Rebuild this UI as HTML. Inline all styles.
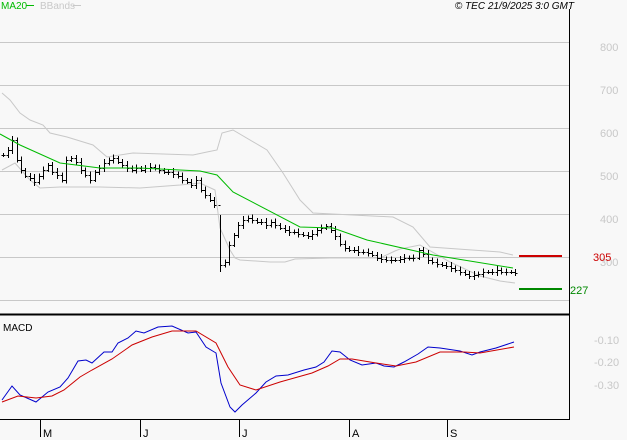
<!DOCTYPE html>
<html><head><meta charset="utf-8"><style>
body{margin:0;background:#f8f8f8;width:627px;height:440px;overflow:hidden;font-family:"Liberation Sans",sans-serif}
svg{position:absolute;left:0;top:0}
</style></head><body>
<svg id="s" width="627" height="440" xmlns="http://www.w3.org/2000/svg">
<rect width="627" height="440" fill="#f8f8f8"/>
<g stroke="#c8c8c8" stroke-width="1">
<line x1="0" y1="42.5" x2="569" y2="42.5"/><line x1="0" y1="85.5" x2="569" y2="85.5"/>
<line x1="0" y1="128.5" x2="569" y2="128.5"/><line x1="0" y1="171.5" x2="569" y2="171.5"/>
<line x1="0" y1="214.5" x2="569" y2="214.5"/><line x1="0" y1="257.5" x2="569" y2="257.5"/>
<line x1="0" y1="300.5" x2="569" y2="300.5"/>
</g>
<line x1="569.5" y1="9" x2="569.5" y2="420" stroke="#000"/>
<line x1="0" y1="314.5" x2="569" y2="314.5" stroke="#000" stroke-width="2"/>
<line x1="0" y1="419.5" x2="569" y2="419.5" stroke="#000"/>
<g stroke="#000"><line x1="40.5" y1="420" x2="40.5" y2="437"/><line x1="140.5" y1="420" x2="140.5" y2="437"/><line x1="239.5" y1="420" x2="239.5" y2="437"/><line x1="349.5" y1="420" x2="349.5" y2="437"/><line x1="447.5" y1="420" x2="447.5" y2="437"/></g>
<g font-size="11" fill="#000"><text x="43" y="437">M</text><text x="143" y="437">J</text><text x="242" y="437">J</text><text x="352" y="437">A</text><text x="450" y="437">S</text></g>
<g font-size="11" fill="#c8c8c8"><text x="600" y="51">800</text><text x="600" y="94">700</text><text x="600" y="137">600</text><text x="600" y="180">500</text><text x="600" y="223">400</text><text x="600" y="266">300</text>
<text x="594" y="344">-0.10</text><text x="594" y="366">-0.20</text><text x="594" y="389">-0.30</text></g>
<text x="593" y="261" font-size="11" fill="#cc0000">305</text>
<text x="570" y="294" font-size="11" fill="#008800">227</text>
<line x1="519" y1="256" x2="562" y2="256" stroke="#cc0000" stroke-width="2"/>
<line x1="519" y1="289" x2="562" y2="289" stroke="#008800" stroke-width="2"/>
<text x="1" y="9" font-size="10" fill="#00bb00">MA20</text><line x1="26" y1="5.5" x2="34" y2="5.5" stroke="#00bb00"/>
<text x="40" y="9" font-size="10" fill="#c8c8c8">BBands</text><line x1="73" y1="5.5" x2="81" y2="5.5" stroke="#c8c8c8"/>
<text x="574" y="9" font-size="10" font-style="italic" text-anchor="end" fill="#000">© TEC 21/9/2025 3:0 GMT</text>
<text x="3" y="331" font-size="10" fill="#000">MACD</text>
<polyline fill="none" stroke="#c8c8c8" points="2,93 10,100 20,113 30,120 43,125 50,133 67,137 93,145 107,157 133,153 193,155 207,152 217,150 222,133 233,130 267,150 283,173 300,200 313,213 393,217 413,227 430,247 500,252 513,255"/>
<polyline fill="none" stroke="#c8c8c8" points="2,170 15,163 30,180 40,188 60,187 100,187 140,188 180,185 200,183 215,190 220,228 230,250 235,258 240,260 270,262 285,262 295,259 330,258 380,258 395,251 400,249 420,245 450,262 480,276 500,281 515,283"/>
<g id="bars" stroke="#000" fill="none"></g>
<polyline fill="none" stroke="#00bb00" points="0,134 20,145 60,163 100,168 140,168 200,171 217,175 233,192 300,227 333,228 367,240 433,255 513,268"/>
<polyline fill="none" stroke="#0000cc" points="2,400 12,386 20,395 36,402 48,392 60,387 68,378 78,361 86,360 92,363 104,352 112,352 118,343 128,338 136,331 144,333 158,327 172,326 188,333 196,332 206,347 216,353 221,383 230,407 235,412 242,405 256,393 266,382 276,376 288,375 304,370 316,367 324,362 332,351 340,352 350,360 362,365 376,363 384,366 394,367 404,362 418,354 428,347 440,348 460,351 472,355 480,352 496,348 514,342"/>
<polyline fill="none" stroke="#cc0000" points="2,402 18,396 36,398 52,396 64,390 80,377 92,370 112,359 132,345 152,337 172,331 196,331 216,343 228,367 240,385 256,390 280,382 312,373 328,366 340,359 352,359 376,363 396,366 416,362 440,352 464,352 480,353 514,347"/>
</svg>
<script>
var c=[[3,155],[8,150],[12,140],[17,160],[21,170],[25,176],[30,178],[34,182],[39,176],[43,170],[48,165],[52,172],[57,175],[62,180],[66,160],[71,158],[76,162],[81,170],[85,175],[90,180],[95,172],[99,168],[104,163],[109,160],[113,158],[118,162],[122,165],[127,168],[132,170],[136,168],[141,170],[145,168],[150,167],[155,168],[159,170],[164,172],[168,172],[173,174],[178,176],[182,180],[187,182],[191,185],[196,180],[201,190],[205,195],[210,200],[214,205],[220,265],[225,262],[229,245],[234,235],[238,225],[243,220],[248,218],[252,220],[257,222],[261,222],[266,225],[271,222],[275,225],[280,228],[285,230],[289,232],[294,232],[298,234],[303,235],[308,236],[312,234],[317,230],[321,228],[326,226],[331,230],[335,236],[340,244],[345,248],[349,250],[354,250],[358,252],[363,252],[368,253],[372,255],[377,258],[381,259],[386,260],[391,260],[395,260],[400,259],[404,258],[409,258],[413,258],[419,250],[423,254],[428,260],[432,262],[437,264],[442,265],[446,266],[451,268],[455,270],[460,272],[465,274],[469,276],[474,275],[478,274],[483,272],[488,272],[492,272],[497,270],[501,272],[506,272],[511,272],[515,273]];
var g=document.getElementById('bars'),h='';
for(var i=0;i<c.length;i++){var x=c[i][0]+.5,y=c[i][1],p=i>0?c[i-1][1]:y,r=4+((i*7)%5);
var t=Math.min(y,p)-r/2,b=Math.max(y,p)+r/2;if(i==47){t=215;b=272;}
h+='<line x1="'+x+'" y1="'+t+'" x2="'+x+'" y2="'+b+'"/><line x1="'+(x-2)+'" y1="'+(p+.5)+'" x2="'+x+'" y2="'+(p+.5)+'"/><line x1="'+x+'" y1="'+(y+.5)+'" x2="'+(x+2)+'" y2="'+(y+.5)+'"/>';}
g.innerHTML=h;
</script>
</body></html>
